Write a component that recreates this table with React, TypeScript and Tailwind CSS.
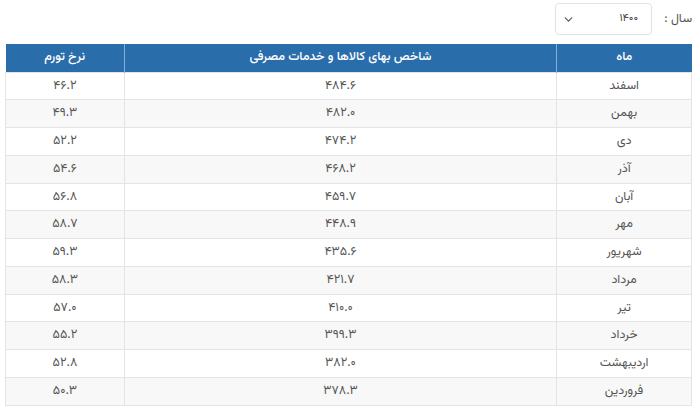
import { ChevronDown } from 'lucide-react';

const rows: [string, string, string][] = [
  ['اسفند', '۴۸۴.۶', '۴۶.۲'],
  ['بهمن', '۴۸۲.۰', '۴۹.۳'],
  ['دی', '۴۷۴.۲', '۵۲.۲'],
  ['آذر', '۴۶۸.۲', '۵۴.۶'],
  ['آبان', '۴۵۹.۷', '۵۶.۸'],
  ['مهر', '۴۴۸.۹', '۵۸.۷'],
  ['شهریور', '۴۳۵.۶', '۵۹.۳'],
  ['مرداد', '۴۲۱.۷', '۵۸.۳'],
  ['تیر', '۴۱۰.۰', '۵۷.۰'],
  ['خرداد', '۳۹۹.۳', '۵۵.۲'],
  ['اردیبهشت', '۳۸۲.۰', '۵۲.۸'],
  ['فروردین', '۳۷۸.۳', '۵۰.۳'],
];

export default function App() {
  return (
    <div
      dir="rtl"
      className="w-[700px] h-[412px] bg-white text-[#555] overflow-hidden"
      style={{ fontFamily: '"Vazirmatn", "Noto Sans Arabic", "DejaVu Sans", sans-serif' }}
    >
      <div className="flex items-center h-[38px] pr-[8px] gap-[12px]">
        <span className="text-[12.5px] text-[#555]">سال :</span>
        <div className="flex items-center justify-between w-[97px] h-[32px] border border-[#e2e2e2] rounded-[4px] pl-[6px] pr-[13px]">
          <span className="text-[11px] text-[#444]">۱۴۰۰</span>
          <ChevronDown size={13} strokeWidth={2} className="text-[#555]" />
        </div>
      </div>
      <div className="mt-[6px] pr-[8px] pl-[5px]">
        <table className="w-[687px] border-collapse text-[12.5px]">
          <thead>
            <tr className="h-[28px] bg-[#2a6dab] text-white">
              <th className="w-[135px] font-medium text-[12.5px] border-l border-[#7fb0e0] text-center">ماه</th>
              <th className="w-[433px] font-medium text-[12.5px] border-l border-[#7fb0e0] text-center">شاخص بهای کالاها و خدمات مصرفی</th>
              <th className="w-[119px] font-medium text-[12.5px] text-center">نرخ تورم</th>
            </tr>
          </thead>
          <tbody>
            {rows.map(([m, idx, rate], i) => (
              <tr key={m} className={`h-[27.75px] ${i % 2 === 1 ? 'bg-[#f8f8f8]' : 'bg-white'}`}>
                <td className="border border-[#e4e4e4] text-center">{m}</td>
                <td className="border border-[#e4e4e4] text-center">{idx}</td>
                <td className="border border-[#e4e4e4] text-center">{rate}</td>
              </tr>
            ))}
          </tbody>
        </table>
      </div>
    </div>
  );
}
